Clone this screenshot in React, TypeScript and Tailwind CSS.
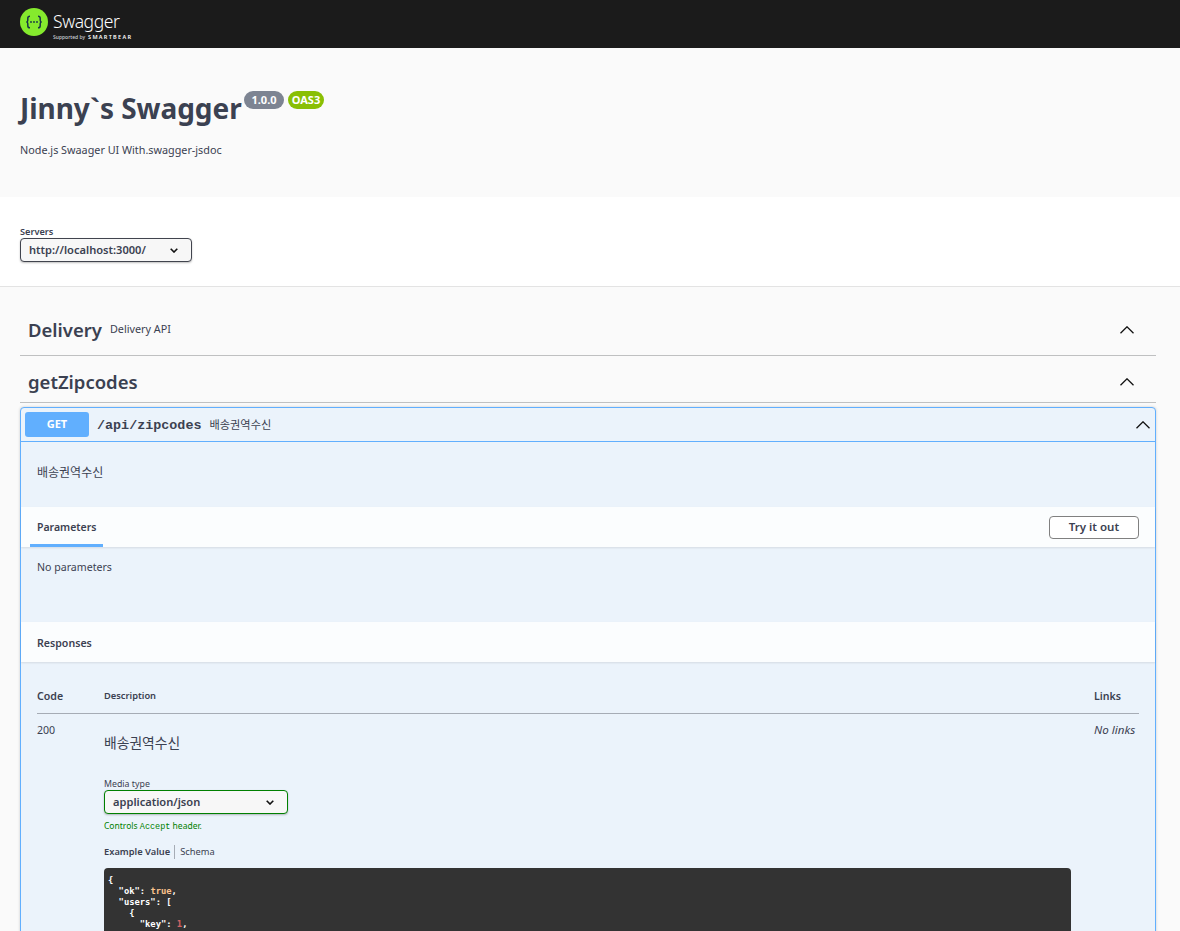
const sans = "font-['Noto_Sans','Noto_Sans_CJK_KR',sans-serif]";

function Logo() {
  return (
    <div className="flex items-start">
      <svg width="28" height="28" viewBox="0 0 28 28" className="mt-2">
        <circle cx="14" cy="14" r="14" fill="#85ea2d" />
        <path
          d="M10 8.2c-1.6 0-2.2.8-2.2 2.1v2c0 1-.5 1.6-1.4 1.7.9.1 1.4.7 1.4 1.7v2c0 1.3.6 2.1 2.2 2.1M18 8.2c1.6 0 2.2.8 2.2 2.1v2c0 1 .5 1.6 1.4 1.7-.9.1-1.4.7-1.4 1.7v2c0 1.3-.6 2.1-2.2 2.1"
          fill="none"
          stroke="#173647"
          strokeWidth="1.5"
        />
        <circle cx="11" cy="14" r="0.9" fill="#173647" />
        <circle cx="14" cy="14" r="0.9" fill="#173647" />
        <circle cx="17" cy="14" r="0.9" fill="#173647" />
      </svg>
      <div className="ml-[5px] flex flex-col text-white">
        <span className="mt-[10px] h-[22px] text-[17.5px] leading-[22px] font-light tracking-[-0.4px]">Swagger</span>
        <span className="mt-[1px] flex h-[8px] items-center text-[5px] leading-[8px] font-medium whitespace-nowrap">
          <span className="text-gray-300">Supported by</span>
          <span className="ml-[3px] text-[5.5px] font-semibold tracking-[1.3px]">SMARTBEAR</span>
        </span>
      </div>
    </div>
  );
}

function Arrow({ className }: { className?: string }) {
  return (
    <svg width="14" height="8" viewBox="0 0 14 8" className={className}>
      <path d="M0.5 7.2 7 0.8l6.5 6.4" fill="none" stroke="#111" strokeWidth="1.3" />
    </svg>
  );
}

function Caret() {
  return (
    <svg width="8" height="5" viewBox="0 0 8 5">
      <path d="M.7.7 4 4 7.3.7" fill="none" stroke="#111" strokeWidth="1.6" />
    </svg>
  );
}

function TagHeader({ name, desc, offset }: { name: string; desc?: string; offset: string }) {
  return (
    <div className={`flex h-[47px] items-center border-b border-[#bfc0c1] pr-[22px] pl-[8px] ${offset}`}>
      <span className="text-[18.5px] leading-[26px] font-semibold text-[#3b4151]">{name}</span>
      {desc && <span className="mt-[-2px] ml-[8px] text-[10.8px] text-[#3b4151]">{desc}</span>}
      <Arrow className="ml-auto" />
    </div>
  );
}

function Select({ label, green, width }: { label: string; green?: boolean; width: string }) {
  return (
    <div
      className={`flex h-[24px] items-center justify-between rounded-[4px] border bg-[#f7f7f7] pr-[13px] pl-[8px] text-[11.1px] font-semibold text-[#3b4151] shadow-[0_1px_2px_rgba(0,0,0,0.25)] ${width} ${
        green ? 'border-[#008000]' : 'border-[#41444e]'
      }`}
    >
      {label}
      <Caret />
    </div>
  );
}

export default function App() {
  return (
    <div className={`h-[931px] overflow-hidden bg-[#fafafa] ${sans}`}>
      <header className="flex h-[48px] bg-[#1b1b1b] pl-[20px]">
        <Logo />
      </header>

      <section className="h-[149px] px-[20px] pt-[41px]">
        <div className="flex items-start">
          <h1 className="w-[224px] text-[28px] leading-[38px] font-bold tracking-[-0.05px] whitespace-nowrap text-[#3b4151]">
            Jinny`s Swagger
          </h1>
          <span className="mt-[2px] flex h-[18px] w-[40px] items-center justify-center rounded-full bg-[#7d8492] text-[11px] font-bold text-white">
            1.0.0
          </span>
          <span className="mt-[2px] ml-[4px] flex h-[18px] w-[36px] items-center justify-center rounded-full bg-[#89bf04] text-[11px] font-bold text-white">
            OAS3
          </span>
        </div>
        <p className="mt-[15px] text-[10.8px] leading-[16px] text-[#3b4151]">Node.js Swaager UI With.swagger-jsdoc</p>
      </section>

      <section className="h-[90px] border-b border-[#e3e3e3] bg-white px-[20px] pt-[28px]">
        <div className="text-[9.2px] leading-[13px] font-semibold text-[#3b4151]">Servers</div>
        <Select label="http://localhost:3000/" width="w-[172px]" />
      </section>

      <main className="pt-[22px] pr-[24px] pl-[20px]">
        <TagHeader name="Delivery" desc="Delivery API" offset="pb-[4px]" />
        <TagHeader name="getZipcodes" offset="pt-[6px]" />

        <div className="mt-[4px] rounded-[4px] border border-[#61affe] bg-[#ebf3fb] shadow-[0_0_3px_rgba(0,0,0,0.19)]">
          <div className="flex h-[34px] items-center border-b border-[#61affe] pr-[5px] pl-[4px]">
            <span className="flex h-[25px] w-[64px] items-center justify-center rounded-[3px] bg-[#61affe] text-[11px] font-bold text-white">
              GET
            </span>
            <span className="mt-[3px] ml-[8px] font-['Liberation_Mono','Noto_Sans_CJK_KR',monospace] text-[13.4px] font-bold text-[#3b4151]">
              /api/zipcodes
            </span>
            <span className="mt-[1px] ml-[8px] text-[11.2px] text-[#3b4151]">배송권역수신</span>
            <Arrow className="mt-[1px] ml-auto" />
          </div>

          <div className="h-[65px] px-[16px] pt-[23px] text-[12px] leading-[16px] text-[#3b4151]">배송권역수신</div>

          <div className="flex h-[40px] items-center justify-between bg-white/80 pr-[16px] pl-[9px] shadow-[0_1px_2px_rgba(0,0,0,0.1)]">
            <div className="flex h-full items-center border-b-[3px] border-[#61affe] px-[7px] pt-[5px] text-[10.5px] font-semibold text-[#3b4151]">
              Parameters
            </div>
            <button className="h-[23px] w-[90px] rounded-[4px] border border-[#808080] bg-white text-[11.5px] font-semibold text-[#3b4151]">
              Try it out
            </button>
          </div>

          <div className="h-[75px] px-[16px] pt-[12px] text-[10.6px] leading-[16px] text-[#3b4151]">No parameters</div>

          <div className="flex h-[40px] items-center bg-white/80 px-[16px] pt-[3px] text-[10.6px] font-semibold text-[#3b4151] shadow-[0_1px_2px_rgba(0,0,0,0.1)]">
            Responses
          </div>

          <div className="px-[16px] pt-[21px]">
            <div className="flex h-[31px] items-start border-b border-[#a6acb5] pt-[5px] text-[#3b4151]">
              <span className="w-[67px] text-[10.6px] leading-[16px] font-semibold">Code</span>
              <span className="text-[9.3px] leading-[16px] font-semibold">Description</span>
              <span className="ml-auto w-[45px] text-[10.6px] leading-[16px] font-semibold">Links</span>
            </div>
            <div className="flex pt-[8px] text-[#3b4151]">
              <span className="w-[67px] text-[10.6px] leading-[16px]">200</span>
              <div className="w-[967px]">
                <p className="mt-[11px] text-[13.8px] leading-[20px]">배송권역수신</p>
                <p className="mt-[25px] text-[8.8px] leading-[12px]">Media type</p>
                <Select label="application/json" green width="w-[184px]" />
                <p className="mt-[6px] text-[8.5px] leading-[12px] text-[#008000]">
                  Controls <span className="font-['Liberation_Mono',monospace]">Accept</span> header.
                </p>
                <div className="mt-[12px] flex h-[14px] items-center text-[9.3px] leading-[14px]">
                  <span className="border-r border-[#a6acb5] pr-[4px] font-semibold">Example Value</span>
                  <span className="pl-[5px]">Schema</span>
                </div>
                <pre className="mt-[9px] h-[200px] rounded-[4px] bg-[#333333] px-[4px] py-[7px] font-['DejaVu_Sans_Mono',monospace] text-[8.8px] leading-[11px] font-bold text-white">
                  {'{\n  "ok": '}
                  <span className="text-[#fcc28c]">true</span>
                  {',\n  "users": [\n    {\n      "key": '}
                  <span className="text-[#d36363]">1</span>
                  {',\n'}
                </pre>
              </div>
              <span className="ml-auto w-[45px] text-[11.6px] leading-[16px] italic">No links</span>
            </div>
          </div>
        </div>
      </main>
    </div>
  );
}
